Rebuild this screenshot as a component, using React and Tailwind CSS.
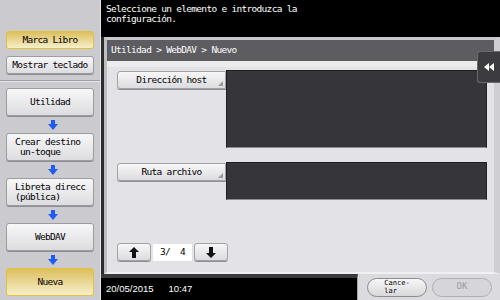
import React from 'react';

const mono = "font-['DejaVu_Sans_Mono','Liberation_Mono',monospace]";

const BlueArrow = () => (
	<div className="h-[17px] flex items-center justify-center">
		<svg width="10" height="10" viewBox="0 0 10 10">
			<rect x="3" y="0" width="4" height="5" fill="#1f5df2" />
			<polygon points="0,4 10,4 5,10" fill="#1f5df2" />
		</svg>
	</div>
);

const Grip = () => (
	<svg className="absolute right-[2px] bottom-[2px]" width="5" height="5" viewBox="0 0 5 5">
		<polygon points="5,0 5,5 0,5" fill="#9a999e" />
	</svg>
);

const SideButton = ({ children, yellow, className = '' }) => (
	<div
		className={`relative w-[88px] rounded-[3px] border flex items-center text-black text-[9.5px] leading-[10px] tracking-[-0.7px] ${
			yellow
				? 'border-[#e3c23a] bg-gradient-to-b from-[#dcbf5c] to-[#f7efc9]'
				: 'border-[#9d9ca1] bg-gradient-to-b from-[#f7f7f8] to-[#dddce0] shadow-[0_1px_0_#8e8d92]'
		} ${className}`}
	>
		{children}
	</div>
);

const FieldButton = ({ label }) => (
	<div className="relative w-[109px] h-[18px] rounded-l-[3px] border border-[#a3a2a7] bg-gradient-to-b from-[#f7f7f8] to-[#dcdbdf] flex items-center justify-center text-[9.5px] tracking-[-0.7px] text-black shadow-[0_1px_0_#8e8d92]">
		{label}
		<Grip />
	</div>
);

const PagerButton = ({ up }) => (
	<div className="w-[34px] h-[18px] rounded-[3px] border border-[#a3a2a7] bg-gradient-to-b from-[#f7f7f8] to-[#dcdbdf] flex items-center justify-center shadow-[0_1px_0_#8e8d92]">
		<svg width="10" height="11" viewBox="0 0 10 11">
			{up ? (
				<polygon points="5,0 10,5 7,5 7,11 3,11 3,5 0,5" fill="#111" />
			) : (
				<polygon points="3,0 7,0 7,6 10,6 5,11 0,6 3,6" fill="#111" />
			)}
		</svg>
	</div>
);

export default function App() {
	return (
		<div className={`w-[500px] h-[300px] flex overflow-hidden bg-black ${mono}`}>
			{/* left column */}
			<aside className="w-[101px] h-full bg-[#cbcacf] border-r border-[#e4e4e6] flex flex-col">
				<div className="pl-[6px] pt-[31px] flex flex-col gap-[7px]">
					<SideButton yellow className="h-[18px] justify-center">Marca Libro</SideButton>
					<SideButton className="h-[18px] justify-center">Mostrar teclado</SideButton>
				</div>
				<div className="mt-[6px] border-t border-[#9e9da2] border-b border-b-[#e8e8ea]" />
				<div className="pl-[6px] pt-[6px] flex flex-col">
					<SideButton className="h-[28px] justify-center">Utilidad</SideButton>
					<BlueArrow />
					<SideButton className="h-[28px] pl-[8px]">
						<span>Crear destino<br />&nbsp;un-toque</span>
					</SideButton>
					<BlueArrow />
					<SideButton className="h-[28px] pl-[8px]">
						<span>Libreta direcc<br />(pública)</span>
					</SideButton>
					<BlueArrow />
					<SideButton className="h-[28px] justify-center">WebDAV</SideButton>
					<BlueArrow />
					<SideButton yellow className="h-[28px] justify-center">Nueva</SideButton>
				</div>
			</aside>

			{/* right column */}
			<div className="flex-1 flex flex-col">
				<div className="h-[37px] pl-[5px] pt-[4px] text-white text-[9.5px] leading-[10px] tracking-[-0.7px]">
					Seleccione un elemento e introduzca la
					<br />
					configuración.
				</div>

				<div className="flex-1 flex">
					<div className="w-[3px] bg-[#2c2c2f]" />
					<div className="relative flex-1 flex flex-col bg-[#e3e2e6] border-l-[3px] border-l-[#bebdc2] border-t-[3px] border-t-[#c9c8cc] border-r-[6px] border-r-[#cfced2] border-b-[2px] border-b-[#f0f0f2]">
						<div className="h-[21px] bg-[#5d5c61] text-white text-[9.5px] tracking-[-0.7px] flex items-center pl-[4px]">
							Utilidad &gt; WebDAV &gt; Nuevo
						</div>
						<div className="h-[6px] bg-[#ececee]" />
						<div className="flex-1 flex flex-col pl-[10px]">
							<div className="mt-[3px] flex items-start">
								<div className="mt-[1px]">
									<FieldButton label="Dirección host" />
								</div>
								<div className="w-[261px] h-[78px] bg-[#363539] border border-[#1f1f21] border-b-[#8c8b90]" />
							</div>
							<div className="mt-[14px] flex items-start">
								<div className="mt-[1px]">
									<FieldButton label="Ruta archivo" />
								</div>
								<div className="w-[261px] h-[38px] bg-[#363539] border border-[#1f1f21] border-b-[#8c8b90]" />
							</div>
							<div className="mt-auto mb-[11px] flex items-center gap-[2px]">
								<PagerButton up />
								<div className="w-[39px] h-[17px] bg-white flex items-center justify-center text-[9.5px] text-black tracking-[-0.7px]">
									3/&nbsp;&nbsp;4
								</div>
								<PagerButton />
							</div>
						</div>
						<div className="absolute right-[-6px] top-[11px] w-[23px] h-[32px] bg-[#3c3b40] border border-[#6a696e] border-r-0 rounded-l-[3px] flex items-center justify-center">
							<svg width="11" height="8" viewBox="0 0 11 8">
								<polygon points="0,4 5,0 5,8" fill="#fff" />
								<polygon points="5,4 10,0 10,8" fill="#fff" />
							</svg>
						</div>
					</div>
				</div>

				<div className="h-[26px] flex">
					<div className="w-[257px] bg-black border-t-[4px] border-t-[#3b3b3e] border-r border-r-[#a5a4a9] flex items-center pl-[5px] gap-[15px] text-white text-[9.5px] font-['Liberation_Sans',Arial,sans-serif]">
						<span>20/05/2015</span>
						<span>10:47</span>
					</div>
					<div className="flex-1 bg-[#dbdadf] flex items-center pl-[9px] gap-[5px]">
						<div className="w-[60px] h-[19px] rounded-full border border-[#8d8c91] bg-gradient-to-b from-[#f7f7f8] to-[#d8d7db] flex items-center justify-center text-[7px] leading-[8px] text-black">
							<span>Cance-<br />lar</span>
						</div>
						<div className="w-[60px] h-[19px] rounded-full border border-[#b0afb4] bg-[#d6d5d9] flex items-center justify-center text-[9px] text-[#9d9ca1]">
							OK
						</div>
					</div>
				</div>
			</div>
		</div>
	);
}
